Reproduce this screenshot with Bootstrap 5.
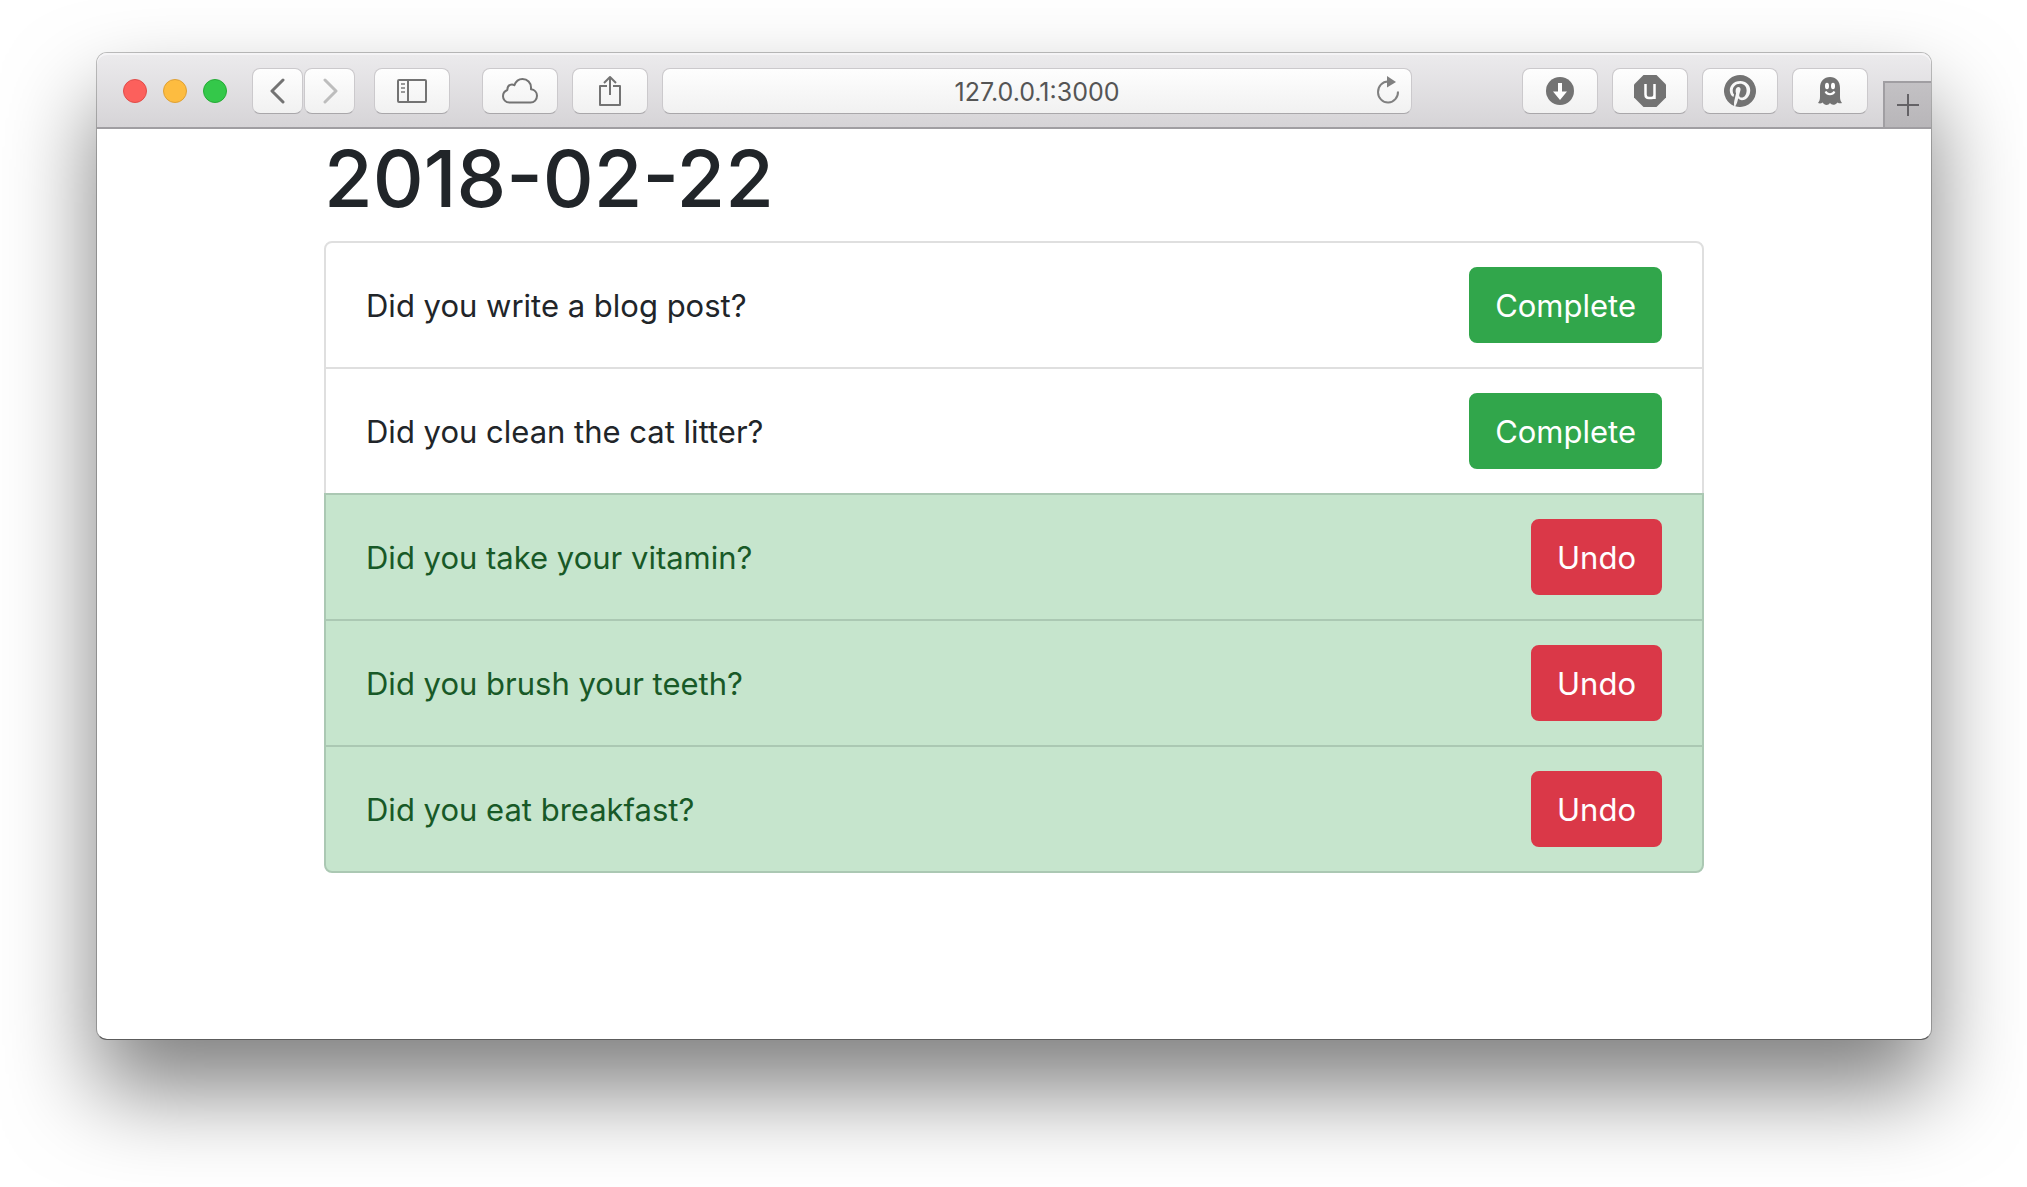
<!DOCTYPE html>
<html lang="en">
<head>
<meta charset="utf-8">
<meta name="viewport" content="width=device-width, initial-scale=1">
<title>2018-02-22</title>
<link rel="stylesheet" href="https://cdn.jsdelivr.net/npm/bootstrap@5.3.0/dist/css/bootstrap.min.css">
<style>
body { font-family: Inter, "Liberation Sans", sans-serif; color: #212529; background: #fff; min-height: 100vh; padding: 52px 95px 147px 96px; overflow-x: hidden; }
.app-window { background: #fff; border: 1px solid rgba(0,0,0,.24); background-clip: padding-box; border-bottom-color: #5c5c5c; border-radius: 11px; box-shadow: 0 50px 90px rgba(0,0,0,.5); }
.title-bar { height: 76px; padding: 2px 0 0 26px; background: linear-gradient(#ecebed, #d6d4d7); border-bottom: 2px solid #a09ea2; border-radius: 10px 10px 0 0; box-shadow: inset 0 2px 0 #f5f4f6; }
.light { width: 24px; height: 24px; padding: 0; border: 1px solid; border-radius: 50%; }
.light-close { background: #fc605c; border-color: #e04c49; }
.light-min { background: #fdbc40; border-color: #dea035; }
.light-zoom { background: #34c84a; border-color: #25ab35; }
.tool { width: 76px; height: 46px; padding: 0; color: #737373; background: linear-gradient(#fefefe, #f1f1f1); border: 1px solid #cbc9cc; border-bottom-color: #a9a7aa; border-radius: 8px; display: flex; align-items: center; justify-content: center; }
.tool-nav { width: 51px; }
.tool:disabled { color: #bdbdbd; }
.tool-group { margin-left: 25px; gap: 1px; }
.tool-row { gap: 14px; }
.tool-side { margin: 0 32px 0 19px; }
.address { margin: 0 110px 0 14px; }
.address input { display: block; width: 100%; height: 46px; padding: 2px 48px 0; text-align: center; font-size: 25px; line-height: 30px; color: #555; background: linear-gradient(#fefefe, #f1f1f1); border: 1px solid #cbc9cc; border-bottom-color: #a9a7aa; border-radius: 8px; }
.reload { right: 12px; top: 0; height: 46px; padding: 0; border: 0; background: none; color: #808080; }
.new-tab { width: 48px; height: 46px; margin-left: 15px; padding: 0; border: solid #a09ea2; border-width: 2px 0 0 2px; background: linear-gradient(#c3c1c4, #b8b6b9); color: #646266; }
.tool svg, .reload svg, .new-tab svg { display: block; flex: none; }
.new-tab svg { margin: 0 auto; }
.page { max-width: 1440px; padding: 0 30px 166px; }
.page h1 { font-size: 79px; line-height: 98px; margin-bottom: 14px; font-weight: 500; }
.list-group { --bs-list-group-border-width: 2px; --bs-list-group-border-color: #dfdfdf; --bs-list-group-border-radius: 8px; --bs-list-group-item-padding-x: 40px; --bs-list-group-item-padding-y: 24px; --bs-list-group-color: #212529; }
.list-group-item { font-size: 31px; line-height: 48px; }
.list-group-item span { padding-top: 2px; }
.list-group-item + .list-group-item { border-top-width: 2px; margin-top: -2px; }
.list-group-item.list-group-item-success { background: #c6e5cd; color: #185927; border-color: #abc8b3; }
.list-group .btn { --bs-btn-font-size: 31px; --bs-btn-line-height: 48px; --bs-btn-padding-x: 24px; --bs-btn-border-width: 2px; --bs-btn-border-radius: 8px; padding-top: 13px; padding-bottom: 11px; }
.list-group .btn-success { --bs-btn-bg: #31a64b; --bs-btn-border-color: #31a64b; }
.list-group .btn-danger { --bs-btn-bg: #da3848; --bs-btn-border-color: #da3848; }
</style>
</head>
<body>
<div class="app-window">
  <header class="title-bar d-flex align-items-center">
    <div class="d-flex gap-3">
      <button class="light light-close" aria-label="Close"></button>
      <button class="light light-min" aria-label="Minimize"></button>
      <button class="light light-zoom" aria-label="Zoom"></button>
    </div>
    <div class="tool-group d-flex">
      <button class="tool tool-nav" aria-label="Back"><svg width="16" height="26" viewBox="0 0 16 26" fill="none" stroke="currentColor" stroke-width="3" stroke-linecap="round" stroke-linejoin="round"><path d="M13 2 2 13l11 11"/></svg></button>
      <button class="tool tool-nav" aria-label="Forward" disabled><svg width="16" height="26" viewBox="0 0 16 26" fill="none" stroke="currentColor" stroke-width="3" stroke-linecap="round" stroke-linejoin="round"><path d="m3 2 11 11L3 24"/></svg></button>
    </div>
    <button class="tool tool-side" aria-label="Show sidebar"><svg width="30" height="24" viewBox="0 0 30 24" fill="none" stroke="currentColor" stroke-width="2"><rect x="1" y="1" width="28" height="22" rx="1"/><path d="M11 1v22"/><path d="M4 5h4M4 9h4M4 13h4" stroke="#999"/></svg></button>
    <div class="tool-row d-flex">
      <button class="tool" aria-label="iCloud tabs"><svg width="36" height="26" viewBox="0 0 36 26" fill="none" stroke="currentColor" stroke-width="2" stroke-linejoin="round"><path d="M7.500 24.500C3.500 24.500 1 21.500 1 18.200c0-3 1.800-5.200 4.300-6.200C5.500 8.500 7.300 6.500 10 6.500c.8 0 1.600.3 2.300.8C13.700 3.500 16.500 1 20.500 1 25.500 1 29 4.800 29 9.500v1.800c3.500.5 6 3.200 6 6.500 0 3.800-2.800 6.700-6.500 6.700z"/></svg></button>
      <button class="tool" aria-label="Share"><svg width="24" height="32" viewBox="0 0 24 32" fill="none" stroke="currentColor" stroke-width="2"><path d="M9 11H2v19h20V11h-7M12 20V2M6 8l6-6 6 6" stroke-linejoin="round"/></svg></button>
    </div>
    <div class="address position-relative flex-grow-1">
      <input type="text" value="127.0.0.1:3000" aria-label="Address">
      <button class="reload position-absolute" aria-label="Reload"><svg width="24" height="30" viewBox="0 0 24 30" fill="none" stroke="currentColor" stroke-width="2"><path d="M13 5.500h-1A10 10.500 0 1 0 22 15.500"/><path d="M11 0v11.500L20 6z" fill="currentColor" stroke="none"/></svg></button>
    </div>
    <div class="tool-row d-flex">
      <button class="tool" aria-label="Downloads"><svg width="28" height="28" viewBox="0 0 28 28"><circle cx="14" cy="14" r="14" fill="currentColor"/><path d="M12 6h4v8.500h5L14 23l-7-8.500h5z" fill="#fff"/></svg></button>
      <button class="tool" aria-label="Content blocker"><svg width="32" height="32" viewBox="0 0 32 32"><path d="M9.500 0h13L32 9.500v13L22.500 32h-13L0 22.500v-13z" fill="currentColor"/><path d="M11.500 9v10.500c0 2.300 1 3.500 3.300 3.500h2.700c2 0 3-1 3-3V9M20.500 19v5" fill="none" stroke="#fff" stroke-width="2.500"/></svg></button>
      <button class="tool" aria-label="Pin this page"><svg width="32" height="32" viewBox="0 0 16 16" fill="currentColor"><path d="M8 0a8 8 0 0 0-2.915 15.452c-.07-.633-.134-1.606.027-2.297.146-.625.938-3.977.938-3.977s-.239-.479-.239-1.187c0-1.113.645-1.943 1.448-1.943.682 0 1.012.512 1.012 1.127 0 .686-.437 1.712-.663 2.663-.188.796.4 1.446 1.185 1.446 1.422 0 2.515-1.500 2.515-3.664 0-1.915-1.377-3.254-3.342-3.254-2.276 0-3.612 1.707-3.612 3.471 0 .688.265 1.425.595 1.826a.24.24 0 0 1 .056.23c-.061.252-.196.796-.222.907-.035.146-.116.177-.268.107-1-.465-1.624-1.926-1.624-3.100 0-2.523 1.834-4.840 5.286-4.840 2.775 0 4.932 1.977 4.932 4.620 0 2.757-1.739 4.976-4.151 4.976-.811 0-1.573-.421-1.834-.919l-.498 1.902c-.181.695-.669 1.566-.995 2.097A8 8 0 1 0 8 0"/></svg></button>
      <button class="tool" aria-label="Tracker list"><svg width="24" height="28" viewBox="0 0 24 28"><path d="M2 11C2 4 6 0 12 0s10 4 10 11v9c0 2.500.7 4.500 2 6-1.500.6-3 .4-4.500-.6-1.300 1.600-2.700 2.300-4.300 2.300-1.200 0-2.300-.6-3.200-1.700-.9 1.300-2 2-3.400 2-1.600 0-3-.9-4-2.400C3 26.600 1.500 26.700 0 26c1.300-1.500 2-3.500 2-6z" fill="currentColor"/><ellipse cx="9" cy="9" rx="2" ry="3.200" fill="#fff"/><ellipse cx="15" cy="9" rx="2" ry="3.200" fill="#fff"/><path d="M7.500 14.500c1 2 2.700 2.700 4.500 2.700s3.500-.7 4.500-2.700" fill="none" stroke="#fff" stroke-width="2"/></svg></button>
    </div>
    <button class="new-tab align-self-end" aria-label="New tab"><svg width="22" height="22" viewBox="0 0 22 22" stroke="currentColor" stroke-width="2"><path d="M11 0v22M0 11h22"/></svg></button>
  </header>
  <main class="page container-fluid">
    <h1>2018-02-22</h1>
    <ul class="list-group">
      <li class="list-group-item d-flex justify-content-between align-items-center"><span>Did you write a blog post?</span><button class="btn btn-success">Complete</button></li>
      <li class="list-group-item d-flex justify-content-between align-items-center"><span>Did you clean the cat litter?</span><button class="btn btn-success">Complete</button></li>
      <li class="list-group-item list-group-item-success d-flex justify-content-between align-items-center"><span>Did you take your vitamin?</span><button class="btn btn-danger">Undo</button></li>
      <li class="list-group-item list-group-item-success d-flex justify-content-between align-items-center"><span>Did you brush your teeth?</span><button class="btn btn-danger">Undo</button></li>
      <li class="list-group-item list-group-item-success d-flex justify-content-between align-items-center"><span>Did you eat breakfast?</span><button class="btn btn-danger">Undo</button></li>
    </ul>
  </main>
</div>
<script src="https://cdn.jsdelivr.net/npm/bootstrap@5.3.0/dist/js/bootstrap.bundle.min.js"></script>
</body>
</html>
